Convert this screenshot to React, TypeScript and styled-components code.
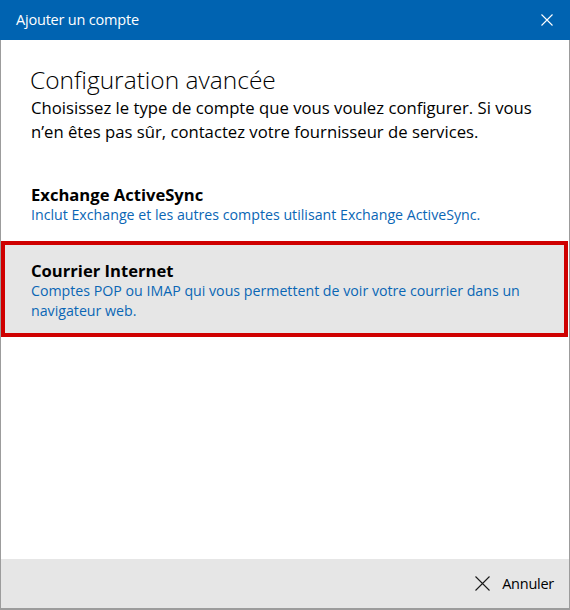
import React from "react";
import styled, { createGlobalStyle } from "styled-components";

const GlobalStyle = createGlobalStyle`
  html, body { margin: 0; padding: 0; background: #ffffff; }
  body { font-family: "Open Sans", "Noto Sans", sans-serif; }
  * { box-sizing: border-box; }
`;

const Window = styled.div`
  width: 570px;
  height: 610px;
  display: flex;
  flex-direction: column;
  background: #ffffff;
  border-left: 1px solid #9c9c9c;
  border-right: 1px solid #9c9c9c;
  border-bottom: 2px solid #9c9c9c;
`;

const TitleBar = styled.div`
  height: 40px;
  margin: 0 -1px;
  background: #0063b1;
  color: #ffffff;
  display: flex;
  align-items: center;
  justify-content: space-between;
  padding: 0 17px 0 16px;
`;

const TitleText = styled.span`
  font-size: 14.5px;
  letter-spacing: -0.2px;
  line-height: 20px;
`;

const IconButton = styled.button`
  border: 0;
  background: transparent;
  padding: 0;
  display: flex;
  align-items: center;
  justify-content: center;
  color: inherit;
  cursor: pointer;
`;

const Body = styled.div`
  flex: 1;
  display: flex;
  flex-direction: column;
  padding-top: 24px;
`;

const Heading = styled.h1`
  margin: 0 0 0 29px;
  font-size: 24.5px;
  font-weight: 300;
  line-height: 32px;
  color: #000000;
`;

const Intro = styled.p`
  margin: 0 0 0 30px;
  font-size: 16.7px;
  line-height: 24px;
  color: #000000;
`;

const OptionList = styled.div`
  margin-top: 21px;
  display: flex;
  flex-direction: column;
`;

const Option = styled.div<{ $selected?: boolean }>`
  margin-right: 1px;
  padding: 16px 26px 12px 26px;
  border: 4px solid ${(p) => (p.$selected ? "#cf0000" : "transparent")};
  background: ${(p) => (p.$selected ? "#e6e6e6" : "transparent")};
  cursor: pointer;
`;

const OptionTitle = styled.div`
  font-size: 16.6px;
  font-weight: 700;
  line-height: 20px;
  color: #000000;
`;

const OptionDesc = styled.div`
  font-size: 14.2px;
  line-height: 20px;
  color: #0a66b5;
`;

const Footer = styled.div`
  height: 49px;
  background: #e6e6e6;
  display: flex;
  align-items: center;
  justify-content: flex-end;
  padding-right: 15px;
`;

const CancelButton = styled.button`
  border: 0;
  background: transparent;
  padding: 0;
  display: flex;
  align-items: center;
  gap: 12px;
  font-family: inherit;
  font-size: 14.5px;
  letter-spacing: -0.25px;
  color: #000000;
  cursor: pointer;
`;

const CloseGlyph = ({ size, color }: { size: number; color: string }) => (
  <svg width={size} height={size} viewBox={`0 0 ${size} ${size}`}>
    <path
      d={`M0.5 0.5 L${size - 0.5} ${size - 0.5} M${size - 0.5} 0.5 L0.5 ${size - 0.5}`}
      stroke={color}
      strokeWidth="1.1"
      fill="none"
    />
  </svg>
);

export default function App() {
  return (
    <>
      <GlobalStyle />
      <Window>
        <TitleBar>
          <TitleText>Ajouter un compte</TitleText>
          <IconButton aria-label="Fermer">
            <CloseGlyph size={12} color="#ffffff" />
          </IconButton>
        </TitleBar>
        <Body>
          <Heading>Configuration avancée</Heading>
          <Intro>
            Choisissez le type de compte que vous voulez configurer. Si vous
            <br />
            n’en êtes pas sûr, contactez votre fournisseur de services.
          </Intro>
          <OptionList>
            <Option>
              <OptionTitle>Exchange ActiveSync</OptionTitle>
              <OptionDesc>
                Inclut Exchange et les autres comptes utilisant Exchange ActiveSync.
              </OptionDesc>
            </Option>
            <Option $selected>
              <OptionTitle>Courrier Internet</OptionTitle>
              <OptionDesc>
                Comptes POP ou IMAP qui vous permettent de voir votre courrier dans un
                <br />
                navigateur web.
              </OptionDesc>
            </Option>
          </OptionList>
        </Body>
        <Footer>
          <CancelButton>
            <CloseGlyph size={15} color="#1a1a1a" />
            Annuler
          </CancelButton>
        </Footer>
      </Window>
    </>
  );
}
